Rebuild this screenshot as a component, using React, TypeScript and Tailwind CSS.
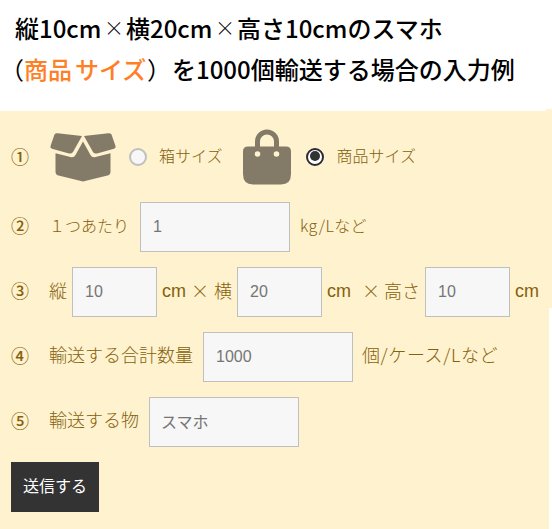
import React, { useState } from 'react';
import clsx from 'clsx';

interface FieldProps {
  value: string;
  className?: string;
}

const Field: React.FC<FieldProps> = ({ value, className }) => (
  <input
    type="text"
    defaultValue={value}
    className={clsx(
      "h-[50px] shrink-0 border border-[#bfbfbf] bg-[#f7f7f7] pl-3 text-base font-normal text-[#757575] font-['Liberation_Sans','Noto_Sans_CJK_JP',sans-serif] focus:outline-none",
      className
    )}
  />
);

interface RowProps {
  mark: string;
  children: React.ReactNode;
}

const Row: React.FC<RowProps> = ({ mark, children }) => (
  <div className="flex h-[50px] items-center">
    <span className="-mt-[5px] w-[38px] shrink-0 text-lg font-medium">{mark}</span>
    {children}
  </div>
);

interface RadioProps {
  checked: boolean;
  onChange: () => void;
}

const Radio: React.FC<RadioProps> = ({ checked, onChange }) => (
  <button
    type="button"
    role="radio"
    aria-checked={checked}
    onClick={onChange}
    className={clsx(
      'flex size-[18px] shrink-0 justify-center rounded-full border-2',
      checked ? 'border-[#2b2b33] bg-white' : 'border-[#bfbfbf] bg-[#f7f7f7]'
    )}
  >
    {checked && <span className="mt-px size-[10px] rounded-full bg-[#333]" />}
  </button>
);

const BoxIcon = () => (
  <svg width="68" height="50" viewBox="0 0 68 50" fill="#837b68">
    <path d="M5.500 2.500Q6.500 1 8.500 1.200L33 4L24 20Q22.700 22 20 21.500L3 16.800Q.8 16 1.500 14Z" />
    <path d="M62.500 2.500Q61.500 1 59.500 1.200L35 4L44 20Q45.300 22 48 21.500L65 16.800Q67.200 16 66.500 14Z" />
    <path d="M34 9.500L41.500 23Q43 25.800 46.500 25L61.500 21.200V40Q61.500 42.500 59.500 43.200L34 49.500L8.500 43.200Q6.500 42.500 6.500 40V21.200L21.500 25Q25 25.800 26.500 23Z" />
  </svg>
);

const BagIcon = () => (
  <svg width="48" height="56" viewBox="0 0 48 56" fill="#837b68">
    <path d="M14.500 20V12.500A9.500 9.500 0 0 1 33.500 12.500V20" fill="none" stroke="#837b68" strokeWidth="5" />
    <path
      fillRule="evenodd"
      d="M5 17.500H43Q48 17.500 48 22.500V45Q48 55.500 38 55.500H10Q0 55.500 0 45V22.500Q0 17.500 5 17.500ZM14.500 22.200A2.800 2.800 0 1 0 14.500 27.800A2.800 2.800 0 1 0 14.500 22.200ZM33.500 22.200A2.800 2.800 0 1 0 33.500 27.800A2.800 2.800 0 1 0 33.500 22.200Z"
    />
  </svg>
);

export default function App() {
  const [size, setSize] = useState<'box' | 'item'>('item');

  return (
    <div className="relative h-[529px] w-[552px] overflow-hidden bg-white font-['Noto_Sans_CJK_JP',sans-serif] whitespace-pre">
      <h1 className="flex h-[111px] flex-col pt-[7px] text-2xl leading-[41px] font-medium text-black">
        <span className="flex pl-[15px]">
          <span className="w-[87px]">縦10cm</span>
          <span className="w-6 text-center text-xl leading-[41px] font-light">×</span>
          <span className="w-[87px]">横20cm</span>
          <span className="w-6 text-center text-xl leading-[41px] font-light">×</span>
          <span>高さ10cmのスマホ</span>
        </span>
        <span className="flex">
          <span className="w-6 font-normal">（</span>
          <span className="w-[51px] text-[#ff7f27]">商品</span>
          <span className="w-[72px] text-[#ff7f27]">サイズ</span>
          <span className="w-[25px] font-normal">）</span>
          <span>を1000個輸送する場合の入力例</span>
        </span>
      </h1>

      <form
        className="flex h-[418px] flex-col bg-[#fff2cf] pl-[11px] text-base font-light text-[#85610c]"
        onSubmit={(e) => e.preventDefault()}
      >
        <div className="flex h-[91px] items-center">
          <span className="-mt-px w-[38px] shrink-0 text-lg font-medium">①</span>
          <BoxIcon />
          <div className="ml-3 flex items-center">
            <Radio checked={size === 'box'} onChange={() => setSize('box')} />
            <span className="-mt-[3px] ml-3">箱サイズ</span>
          </div>
          <div className="ml-5 flex items-center">
            <BagIcon />
            <span className="ml-[15px] flex">
              <Radio checked={size === 'item'} onChange={() => setSize('item')} />
            </span>
            <span className="-mt-[3px] ml-[13px]">商品サイズ</span>
          </div>
        </div>

        <div className="flex flex-col gap-[15px]">
          <Row mark="②">
            <span className="-mt-1 w-[91px]">１つあたり</span>
            <Field value="1" className="w-[150px]" />
            <span className="-mt-1 ml-[10px] tracking-[0.4px]">kg/Lなど</span>
          </Row>
          <Row mark="③">
            <span className="-mt-[5px] w-[23px] text-lg">縦</span>
            <Field value="10" className="w-[85px]" />
            <span className="-mt-0.5 ml-[5px] w-[29px] font-['Liberation_Sans',sans-serif] text-lg">cm</span>
            <span className="-mt-[5px] w-[23px] text-lg">×</span>
            <span className="-mt-[5px] w-[23px] text-lg">横</span>
            <Field value="20" className="w-[85px]" />
            <span className="-mt-0.5 ml-[5px] w-[35px] font-['Liberation_Sans',sans-serif] text-lg">cm</span>
            <span className="-mt-[5px] w-[22px] text-lg">×</span>
            <span className="-mt-[5px] w-[41px] text-lg">高さ</span>
            <Field value="10" className="w-[85px]" />
            <span className="-mt-0.5 ml-[5px] font-['Liberation_Sans',sans-serif] text-lg">cm</span>
          </Row>
          <Row mark="④">
            <span className="-mt-[6px] w-[154px] text-lg">輸送する合計数量</span>
            <Field value="1000" className="w-[150px]" />
            <span className="-mt-[6px] ml-[9px] text-lg tracking-[0.6px]">個/ケース/Lなど</span>
          </Row>
          <Row mark="⑤">
            <span className="-mt-[6px] w-[100px] text-lg">輸送する物</span>
            <Field value="スマホ" className="w-[150px] pb-[3px] pl-[11px]" />
          </Row>
          <button type="submit" className="h-[50px] w-[88px] bg-[#333] pb-1 text-base font-normal text-white">
            送信する
          </button>
        </div>
      </form>

      {/* uneven right edge of the panel */}
      <div className="absolute top-[109px] right-0 h-[2px] w-[6px] bg-[#fff2cf]" />
      <div className="absolute right-0 bottom-0 h-[221px] w-[3px] bg-white" />
    </div>
  );
}
